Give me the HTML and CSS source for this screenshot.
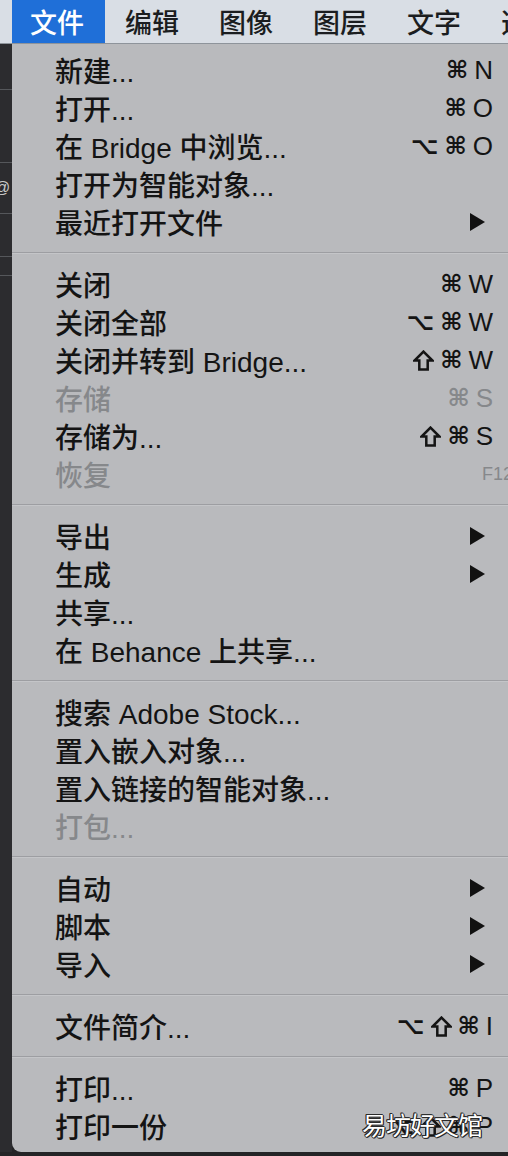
FILE: index.html
```html
<!DOCTYPE html>
<html lang="zh-CN">
<head>
<meta charset="utf-8">
<title>文件菜单</title>
<link rel="stylesheet" href="styles.css">
</head>
<body>
<div class="screen">
  <div class="menubar">
    <div class="bar-item active">文件</div>
    <div class="bar-item">编辑</div>
    <div class="bar-item">图像</div>
    <div class="bar-item">图层</div>
    <div class="bar-item">文字</div>
    <div class="bar-item">选择</div>
  </div>
  <div class="main">
    <div class="side">
      <div class="side-cell h1"></div>
      <div class="side-cell h2"></div>
      <div class="side-cell h3"><span class="side-glyph">@</span></div>
      <div class="side-cell h4"></div>
      <div class="side-cell h5"></div>
    </div>
    <div class="menu">
      <div class="row"><span class="label">新建...</span><span class="key"><span class="cmd">⌘</span>N</span></div>
      <div class="row"><span class="label">打开...</span><span class="key"><span class="cmd">⌘</span>O</span></div>
      <div class="row"><span class="label">在 Bridge 中浏览...</span><span class="key"><span class="opt">⌥</span><span class="cmd">⌘</span>O</span></div>
      <div class="row"><span class="label">打开为智能对象...</span></div>
      <div class="row"><span class="label">最近打开文件</span><span class="arrow"></span></div>
      <div class="sep"></div>
      <div class="row"><span class="label">关闭</span><span class="key"><span class="cmd">⌘</span>W</span></div>
      <div class="row"><span class="label">关闭全部</span><span class="key"><span class="opt">⌥</span><span class="cmd">⌘</span>W</span></div>
      <div class="row"><span class="label">关闭并转到 Bridge...</span><span class="key"><svg class="shift" viewBox="0 0 20 20"><path d="M10 1.5 L18.5 10 H14 V18.5 H6 V10 H1.5 Z"/></svg><span class="cmd">⌘</span>W</span></div>
      <div class="row disabled"><span class="label">存储</span><span class="key"><span class="cmd">⌘</span>S</span></div>
      <div class="row"><span class="label">存储为...</span><span class="key"><svg class="shift" viewBox="0 0 20 20"><path d="M10 1.5 L18.5 10 H14 V18.5 H6 V10 H1.5 Z"/></svg><span class="cmd">⌘</span>S</span></div>
      <div class="row disabled"><span class="label">恢复</span><span class="key fkey">F12</span></div>
      <div class="sep"></div>
      <div class="row"><span class="label">导出</span><span class="arrow"></span></div>
      <div class="row"><span class="label">生成</span><span class="arrow"></span></div>
      <div class="row"><span class="label">共享...</span></div>
      <div class="row"><span class="label">在 Behance 上共享...</span></div>
      <div class="sep"></div>
      <div class="row"><span class="label">搜索 Adobe Stock...</span></div>
      <div class="row"><span class="label">置入嵌入对象...</span></div>
      <div class="row"><span class="label">置入链接的智能对象...</span></div>
      <div class="row disabled"><span class="label">打包...</span></div>
      <div class="sep"></div>
      <div class="row"><span class="label">自动</span><span class="arrow"></span></div>
      <div class="row"><span class="label">脚本</span><span class="arrow"></span></div>
      <div class="row"><span class="label">导入</span><span class="arrow"></span></div>
      <div class="sep"></div>
      <div class="row"><span class="label">文件简介...</span><span class="key"><span class="opt">⌥</span><svg class="shift" viewBox="0 0 20 20"><path d="M10 1.5 L18.5 10 H14 V18.5 H6 V10 H1.5 Z"/></svg><span class="cmd">⌘</span>I</span></div>
      <div class="sep"></div>
      <div class="row"><span class="label">打印...</span><span class="key"><span class="cmd">⌘</span>P</span></div>
      <div class="row"><span class="label">打印一份</span><span class="key"><span class="opt">⌥</span><svg class="shift" viewBox="0 0 20 20"><path d="M10 1.5 L18.5 10 H14 V18.5 H6 V10 H1.5 Z"/></svg><span class="cmd">⌘</span>P</span></div>
    </div>
  </div>
  <div class="watermark">易坊好文馆</div>
</div>
</body>
</html>
```

FILE: styles.css
```css
html, body {
  margin: 0;
  padding: 0;
}
body {
  background: #242426;
  font-family: "Liberation Sans", "Noto Sans CJK SC", sans-serif;
}
.screen {
  position: relative;
  width: 508px;
  height: 1156px;
  overflow: hidden;
  background: #242426;
}
.menubar {
  height: 44px;
  background: #d9dee5;
  display: flex;
  align-items: stretch;
  padding-left: 12px;
  border-bottom: 1px solid #8e949b;
  box-sizing: border-box;
  overflow: hidden;
}
.bar-item {
  display: flex;
  align-items: center;
  padding: 0 20px;
  font-size: 27px;
  font-weight: 500;
  color: #1b1d20;
  font-family: "Noto Sans CJK SC", sans-serif;
  white-space: nowrap;
  flex-shrink: 0;
}
.bar-item.active {
  background: #1f6fd8;
  color: #ffffff;
  padding: 0 21px 0 18px;
}
.main {
  display: flex;
  height: 1108px;
}
.side {
  width: 12px;
  background: #2c2c2f;
  display: flex;
  flex-direction: column;
}
.side-cell {
  border-bottom: 1px solid #55575b;
  position: relative;
  overflow: hidden;
}
.side-cell.h1 { height: 45px; }
.side-cell.h2 { height: 72px; }
.side-cell.h3 { height: 50px; }
.side-cell.h4 { height: 42px; }
.side-cell.h5 { height: 18px; }
.side-glyph {
  position: absolute;
  left: -6px;
  top: 16px;
  color: #c8c8c8;
  font-size: 16px;
}
.menu {
  flex: 1;
  background: #b9babd;
  border-bottom-left-radius: 9px;
  padding: 7px 0;
  overflow: hidden;
}
.row {
  height: 38px;
  display: flex;
  align-items: center;
  justify-content: space-between;
  padding-left: 43px;
  padding-right: 15px;
  font-size: 28px;
  color: #141414;
  white-space: nowrap;
}
.label {
  font-weight: 500;
}
.row.disabled {
  color: #86888b;
}
.key {
  display: flex;
  align-items: center;
  gap: 6px;
  font-family: "Liberation Sans", "DejaVu Sans", sans-serif;
  font-size: 26px;
}
.cmd, .opt {
  font-family: "DejaVu Sans", sans-serif;
  font-weight: bold;
  font-size: 24px;
}
.shift {
  width: 21px;
  height: 21px;
  fill: none;
  stroke: currentColor;
  stroke-width: 2.4;
  stroke-linejoin: miter;
}
.fkey {
  font-size: 18px;
  margin-right: -20px;
}
.arrow {
  width: 0;
  height: 0;
  border-top: 9px solid transparent;
  border-bottom: 9px solid transparent;
  border-left: 15px solid #111111;
  margin-right: 8px;
}
.sep {
  height: 1px;
  background: #9d9ea2;
  border-bottom: 1px solid #c4c5c8;
  margin: 11px 0 11px;
}
.watermark {
  position: absolute;
  left: 362px;
  top: 1106px;
  font-family: "Noto Sans CJK SC", sans-serif;
  font-size: 25px;
  color: #ffffff;
  text-shadow: -1px 0 #2a2a2a, 1px 0 #2a2a2a, 0 -1px #2a2a2a, 0 1px #2a2a2a, 1px 1px #2a2a2a, -1px -1px #2a2a2a;
  letter-spacing: -1px;
}
```
